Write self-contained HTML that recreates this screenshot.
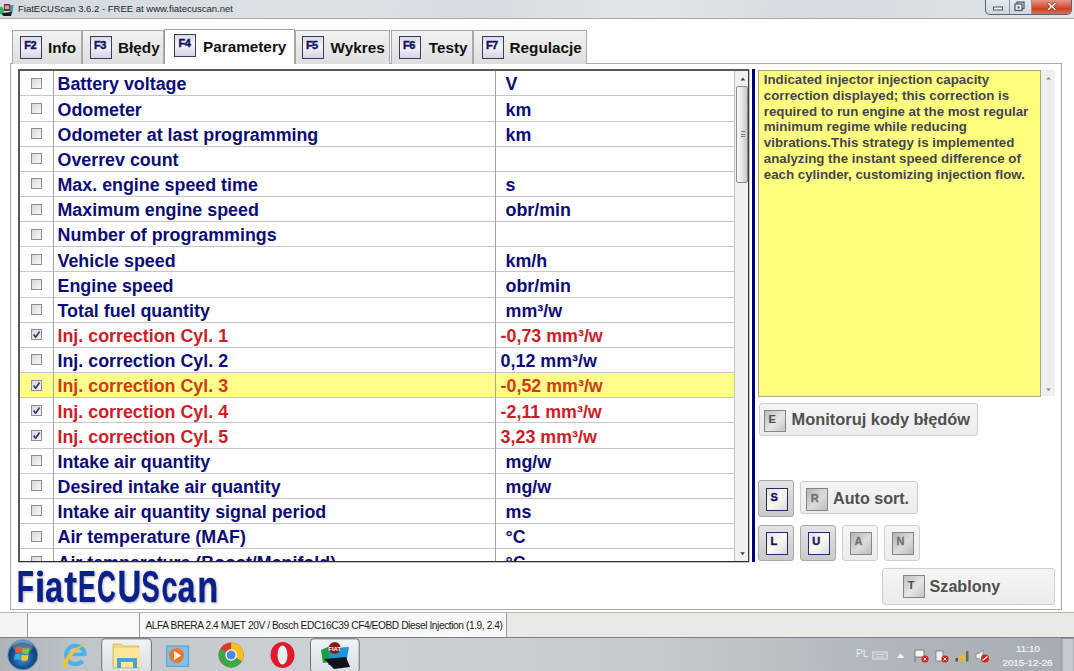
<!DOCTYPE html>
<html><head><meta charset="utf-8">
<style>
*{box-sizing:border-box}
html,body{margin:0;padding:0}
body{width:1074px;height:671px;overflow:hidden;position:relative;background:#fff;font-family:"Liberation Sans",sans-serif}
.abs{position:absolute}
#title{position:absolute;left:0;top:0;width:1074px;height:18.6px;background:linear-gradient(100deg,#d3d9df 0%,#dde2e7 30%,#d6dce1 45%,#e2e6ea 60%,#d5dbe0 75%,#dfe4e8 100%);border-bottom:1px solid #a9adb1}
#title .t{position:absolute;left:18px;top:3.2px;font-size:9.5px;color:#1e1e1e;white-space:nowrap}
#appico{position:absolute;left:2px;top:2px;width:13px;height:13px;border-radius:2px;background:linear-gradient(135deg,#2a7 0%,#153 60%,#a22 100%)}
#wbtn{position:absolute;left:985px;top:-1px;width:87px;height:16px;border:1px solid #5a6470;border-top:none;border-radius:0 0 5px 5px;overflow:hidden;background:linear-gradient(#e8ecf0,#cfd6dd)}
#wbtn .mx{position:absolute;left:23px;top:0;width:23px;height:16px;border-left:1px solid #8a949e;border-right:1px solid #8a949e}
#wbtn .cl{position:absolute;left:46px;top:0;width:41px;height:16px;background:linear-gradient(#e9a08f 0%,#d4533c 50%,#c7402a 60%,#db7a5f 100%)}
.tab{position:absolute;top:30px;height:33.5px;border:1px solid #a9a9a9;border-bottom:none;background:linear-gradient(#f2f2f2,#dedede)}
.tab.act{top:28.7px;height:35.5px;background:#fff;z-index:3;border-color:#a0a0a0}
.key{position:absolute;z-index:4;width:22px;height:22.8px;border:1.5px solid #3a3a5c;background:linear-gradient(#dcdce8 0%,#f4f4fa 45%,#e6e6f0 70%,#d4d4e4 100%);font-size:11px;font-weight:bold;color:#121266;padding:2.8px 0 0 3.2px;line-height:10px;letter-spacing:-0.5px;-webkit-text-stroke:0.45px #121266}
.tl{position:absolute;z-index:4;font-size:15.3px;font-weight:bold;color:#111;white-space:nowrap;line-height:18px}
#panel{position:absolute;left:10px;top:63px;width:1051.5px;height:546.5px;border:1px solid #aaaaaa;background:#fff}
#tbl{position:absolute;left:18px;top:69px;width:731px;height:493px;border-style:solid;border-color:#585858 #3a3a3a #2e2e2e #585858;border-width:2px 1px 1px 2px;overflow:hidden;background:#fff;box-shadow:0.5px 0.5px 0 #8a8a8a}
.row{position:absolute;left:0;width:713.5px;height:25.16px;border-bottom:1px solid #c6c6c6;font-size:17.85px;font-weight:bold;color:#0c0c78}
.row.red{color:#cf1c28}
.row.hl{background:#ffff8c}
.row.hl .nm, .row.hl .vl{color:#d23a14}
.nm{position:absolute;left:37.5px;top:3.3px;white-space:nowrap}
.vl{position:absolute;left:480.6px;top:3.3px;white-space:nowrap}
.cb{position:absolute;left:10.8px;top:6.5px;width:11px;height:11px;border:1px solid #8e8e8e;background:linear-gradient(135deg,#d8d8d8,#f8f8f8)}
.cb.on{background:linear-gradient(135deg,#d6d6e6,#f4f4fc)}
.cb svg{position:absolute;left:0;top:0}
.vline{position:absolute;top:0;width:1px;height:493px;background:#a4a4a4}
#sb1{position:absolute;left:713.5px;top:0;width:15px;height:491px;background:#f0f0f0;border-left:1px solid #c4c4c4}
.thumb{position:absolute;left:1px;top:15px;width:12.2px;height:96.5px;border:1px solid #8e8e8e;border-radius:2px;background:linear-gradient(90deg,#f6f6f6 0%,#e8e8e8 45%,#d4d4d4 80%,#c4c4c4 100%)}
.grip{position:absolute;left:4px;top:44px;width:4px;height:6px;border-top:1px solid #777;border-bottom:1px solid #777}
.grip::after{content:"";position:absolute;left:0;top:2px;width:4px;height:0;border-top:1px solid #777}
#bluebar{position:absolute;left:752px;top:69px;width:3px;height:492.5px;background:#000080}
#desc{position:absolute;left:757.8px;top:69.7px;width:283.5px;height:327.5px;border:1px solid #a8a880;background:#ffff80;font-size:13.3px;font-weight:bold;color:#45454f;line-height:15.77px;padding:1.5px 0 0 5px}
#sb2{position:absolute;left:1041px;top:70px;width:14.4px;height:326px;background:#efefef}
.btn{position:absolute;border:1px solid #cfcfcf;border-radius:3px;background:linear-gradient(#f5f5f5,#ececec)}
.btn .bk{position:absolute;width:22px;height:22.6px;border:1px solid #858585;background:linear-gradient(135deg,#bdbdbd 0%,#e6e6e6 55%,#c4c4c4 100%);color:#4e4e4e;font-size:11px;font-weight:bold;line-height:10px;padding:3.4px 0 0 3.4px;-webkit-text-stroke:0.15px #4e4e4e}
.btn .bk.dis{color:#727272;-webkit-text-stroke:0.3px #727272;background:linear-gradient(135deg,#b4b4b4 0%,#dcdcdc 55%,#bcbcbc 100%)}
.btn .bt{position:absolute;font-size:16.1px;font-weight:bold;color:#505050;white-space:nowrap}
.btn.dn{background:linear-gradient(#e4e4e4,#c9c9c9);border-color:#a8a8a8}
.btn.dn .bk{border:1.6px solid #2a2a66;background:linear-gradient(135deg,#e2e2ea 0%,#fbfbf0 50%,#d8d8e6 100%);color:#141466;padding:2.7px 0 0 3px;-webkit-text-stroke:0.4px #141466}
#logo{position:absolute;left:0;top:0;filter:drop-shadow(1.5px 1.5px 1.2px rgba(40,40,60,0.35))}
#status{position:absolute;left:0;top:612.3px;width:1074px;height:25px;background:#ebe8e6;border-top:1px solid #b8b8b8}
#status .p{position:absolute;top:0;height:24px;background:#f9f9f9;border-right:1px solid #9a9a9a}
#status .st{position:absolute;left:145.5px;top:7px;font-size:10.2px;letter-spacing:-0.42px;color:#1a1a1a;white-space:nowrap}
#task{position:absolute;left:0;top:637px;width:1074px;height:34px;background:linear-gradient(90deg,#aeb3b7 0%,#c0c5c9 8%,#cdd2d6 30%,#c6cbcf 60%,#b2b8bd 80%,#a6acb1 100%);border-top:1px solid #7a8086}
</style></head><body>
<div id="title"><svg class="abs" style="left:0;top:2px" width="16" height="15" viewBox="0 0 16 15"><path d="M0 5 C2 4 4 6 4 9 L3 13 L0 12 Z" fill="#2fb45a"/><path d="M4 2 L10 2 L10 9 L4 9 Z" fill="#7a2a35"/><path d="M5 3.5 L9 3.5 L9 7 L5 7 Z" fill="#d9a0a0"/><path d="M10 3 L13.5 3 L12.5 11 L9.5 11 Z" fill="#3a9aa0"/><path d="M2 11 L12 10 L11 14 L3 14 Z" fill="#151a2a"/></svg><div class="t">FiatECUScan 3.6.2 - FREE at www.fiatecuscan.net</div></div>
<div id="wbtn"><div class="mx"></div><div class="cl"></div>
<svg class="abs" style="left:0;top:0" width="87" height="16"><rect x="7.5" y="8" width="9" height="3" fill="#fff" stroke="#4a5560" stroke-width="1"/>
<rect x="31" y="3" width="7" height="6.5" fill="none" stroke="#4a5560" stroke-width="1.2"/><rect x="29" y="5" width="7" height="6.5" fill="#e6eaee" stroke="#4a5560" stroke-width="1.2"/><rect x="31.5" y="7.5" width="2" height="2" fill="#4a5560"/>
<path d="M63 3.2 L65.8 6.2 L68.6 3.2 L70.4 4.6 L67.4 7.4 L70.4 10.2 L68.6 11.6 L65.8 8.6 L63 11.6 L61.2 10.2 L64.2 7.4 L61.2 4.6 Z" fill="#fff" stroke="#6a3a30" stroke-width="0.7"/></svg></div>

<div id="panel"></div>
<div class="tab" style="left:12.3px;width:69.3px"></div><span class="key" style="left:20px;top:36.0px">F2</span><span class="tl" style="left:48px;top:38.8px">Info</span>
<div class="tab" style="left:81.6px;width:82.80000000000001px"></div><span class="key" style="left:89.8px;top:36.0px">F3</span><span class="tl" style="left:118px;top:38.8px">Błędy</span>
<div class="tab act" style="left:164.4px;width:130.4px"></div><span class="key" style="left:174.3px;top:34.0px">F4</span><span class="tl" style="left:203px;top:37.6px">Parametery</span>
<div class="tab" style="left:294.8px;width:95.69999999999999px"></div><span class="key" style="left:301.7px;top:36.0px">F5</span><span class="tl" style="left:330.6px;top:38.8px">Wykres</span>
<div class="tab" style="left:390.5px;width:82.80000000000001px"></div><span class="key" style="left:398.9px;top:36.0px">F6</span><span class="tl" style="left:428.7px;top:38.8px">Testy</span>
<div class="tab" style="left:473.3px;width:113.30000000000001px"></div><span class="key" style="left:481.7px;top:36.0px">F7</span><span class="tl" style="left:509.5px;top:38.8px">Regulacje</span>

<div id="tbl">
<div class="row" style="top:0.20px"><span class="cb"></span><span class="nm">Battery voltage</span><span class="vl">&nbsp;V</span></div>
<div class="row" style="top:25.36px"><span class="cb"></span><span class="nm">Odometer</span><span class="vl">&nbsp;km</span></div>
<div class="row" style="top:50.52px"><span class="cb"></span><span class="nm">Odometer at last programming</span><span class="vl">&nbsp;km</span></div>
<div class="row" style="top:75.68px"><span class="cb"></span><span class="nm">Overrev count</span><span class="vl"></span></div>
<div class="row" style="top:100.84px"><span class="cb"></span><span class="nm">Max. engine speed time</span><span class="vl">&nbsp;s</span></div>
<div class="row" style="top:126.00px"><span class="cb"></span><span class="nm">Maximum engine speed</span><span class="vl">&nbsp;obr/min</span></div>
<div class="row" style="top:151.16px"><span class="cb"></span><span class="nm">Number of programmings</span><span class="vl"></span></div>
<div class="row" style="top:176.32px"><span class="cb"></span><span class="nm">Vehicle speed</span><span class="vl">&nbsp;km/h</span></div>
<div class="row" style="top:201.48px"><span class="cb"></span><span class="nm">Engine speed</span><span class="vl">&nbsp;obr/min</span></div>
<div class="row" style="top:226.64px"><span class="cb"></span><span class="nm">Total fuel quantity</span><span class="vl">&nbsp;mm&sup3;/w</span></div>
<div class="row red" style="top:251.80px"><span class="cb on"><svg width="9" height="9"><path d="M1.6 4.6 L3.6 7.2 L7.6 1.6" fill="none" stroke="#3a3a5e" stroke-width="1.7" stroke-linejoin="round"/></svg></span><span class="nm">Inj. correction Cyl. 1</span><span class="vl">-0,73 mm&sup3;/w</span></div>
<div class="row" style="top:276.96px"><span class="cb"></span><span class="nm">Inj. correction Cyl. 2</span><span class="vl">0,12 mm&sup3;/w</span></div>
<div class="row red hl" style="top:302.12px"><span class="cb on"><svg width="9" height="9"><path d="M1.6 4.6 L3.6 7.2 L7.6 1.6" fill="none" stroke="#3a3a5e" stroke-width="1.7" stroke-linejoin="round"/></svg></span><span class="nm">Inj. correction Cyl. 3</span><span class="vl">-0,52 mm&sup3;/w</span></div>
<div class="row red" style="top:327.28px"><span class="cb on"><svg width="9" height="9"><path d="M1.6 4.6 L3.6 7.2 L7.6 1.6" fill="none" stroke="#3a3a5e" stroke-width="1.7" stroke-linejoin="round"/></svg></span><span class="nm">Inj. correction Cyl. 4</span><span class="vl">-2,11 mm&sup3;/w</span></div>
<div class="row red" style="top:352.44px"><span class="cb on"><svg width="9" height="9"><path d="M1.6 4.6 L3.6 7.2 L7.6 1.6" fill="none" stroke="#3a3a5e" stroke-width="1.7" stroke-linejoin="round"/></svg></span><span class="nm">Inj. correction Cyl. 5</span><span class="vl">3,23 mm&sup3;/w</span></div>
<div class="row" style="top:377.60px"><span class="cb"></span><span class="nm">Intake air quantity</span><span class="vl">&nbsp;mg/w</span></div>
<div class="row" style="top:402.76px"><span class="cb"></span><span class="nm">Desired intake air quantity</span><span class="vl">&nbsp;mg/w</span></div>
<div class="row" style="top:427.92px"><span class="cb"></span><span class="nm">Intake air quantity signal period</span><span class="vl">&nbsp;ms</span></div>
<div class="row" style="top:453.08px"><span class="cb"></span><span class="nm">Air temperature (MAF)</span><span class="vl">&nbsp;&deg;C</span></div>
<div class="row" style="top:478.24px"><span class="cb"></span><span class="nm">Air temperature (Boost/Manifold)</span><span class="vl">&nbsp;&deg;C</span></div>
<div class="vline" style="left:33.2px"></div>
<div class="vline" style="left:475.2px"></div>
<div id="sb1"><svg class="abs" style="left:3px;top:5px" width="9" height="6"><path d="M2.5 4.4 L4.9 1.4 L7.3 4.4 Z" fill="#404040"/></svg><div class="thumb"><div class="grip"></div></div><svg class="abs" style="left:3px;top:480px" width="9" height="6"><path d="M2.3 1.2 L4.6 4.2 L6.9 1.2 Z" fill="#404040"/></svg></div>
</div>
<div id="bluebar"></div>
<div id="desc">Indicated injector injection capacity correction displayed; this correction is required to run engine at the most regular minimum regime while reducing vibrations.This strategy is implemented analyzing the instant speed difference of each cylinder, customizing injection flow.</div>
<div id="sb2"><svg class="abs" style="left:3px;top:4.5px" width="9" height="6"><path d="M2 4.6 L4.5 2 L7 4.6 Z" fill="#8a8a8a"/></svg><svg class="abs" style="left:3px;top:317px" width="9" height="6"><path d="M2 1.4 L4.5 4 L7 1.4 Z" fill="#8a8a8a"/></svg></div>

<div class="btn" style="left:759px;top:403px;width:219px;height:32.5px"><span class="bk" style="left:4px;top:5.5px">E</span><span class="bt" style="left:31.6px;top:6.3px;font-size:16.4px">Monitoruj kody błędów</span></div>
<div class="btn dn" style="left:758.4px;top:480.4px;width:35.5px;height:37px"><span class="bk" style="left:7px;top:7px">S</span></div>
<div class="btn" style="left:800.3px;top:481.4px;width:117.3px;height:33px"><span class="bk dis" style="left:5px;top:6px">R</span><span class="bt" style="left:31.8px;top:6.8px">Auto sort.</span></div>
<div class="btn dn" style="left:758.4px;top:524.5px;width:35.5px;height:36px"><span class="bk" style="left:7px;top:6.5px">L</span></div>
<div class="btn dn" style="left:800.3px;top:524.5px;width:35.5px;height:36px"><span class="bk" style="left:7px;top:6.5px">U</span></div>
<div class="btn" style="left:842.2px;top:524.5px;width:35.5px;height:36px"><span class="bk dis" style="left:7px;top:6.5px">A</span></div>
<div class="btn" style="left:884px;top:524.5px;width:35.5px;height:36px"><span class="bk dis" style="left:7px;top:6.5px">N</span></div>
<div class="btn" style="left:882.3px;top:568.3px;width:172.3px;height:36.5px"><span class="bk" style="left:20px;top:6px">T</span><span class="bt" style="left:46.3px;top:8px">Szablony</span></div>

<svg id="logo" width="1074" height="671" viewBox="0 0 1074 671"><g font-family="Liberation Sans" font-weight="bold" font-size="45" fill="#0b2088" stroke="#0b2088" stroke-width="0.25">
<text transform="translate(16.81 601.8) scale(0.626 1)">F</text>
<rect x="37.3" y="578.6" width="5.5" height="23.2" stroke="none"/><circle cx="40.05" cy="573.4" r="2.9" stroke="none"/>
<text transform="translate(44.94 601.8) scale(0.725 1)">a</text>
<text transform="translate(64.33 601.8) scale(0.850 1)">t</text>
<text transform="translate(78.01 601.8) scale(0.594 1)">E</text>
<text transform="translate(96.93 601.8) scale(0.578 1)">C</text>
<text transform="translate(117.52 601.8) scale(0.732 1)">U</text>
<text transform="translate(141.30 601.8) scale(0.616 1)">S</text>
<text transform="translate(161.39 601.8) scale(0.633 1)">c</text>
<text transform="translate(177.55 601.8) scale(0.717 1)">a</text>
<text transform="translate(197.13 601.8) scale(0.764 1)">n</text>
</g></svg>

<div id="status">
<div class="p" style="left:0;width:28.3px;background:#f3f3f3"></div>
<div class="p" style="left:28.3px;width:111.7px"></div>
<div class="p" style="left:140px;width:366.7px"></div>
<div class="st">ALFA BRERA 2.4 MJET 20V / Bosch EDC16C39 CF4/EOBD Diesel Injection (1.9, 2.4)</div>
</div>
<div id="task"><svg class="abs" style="left:0;top:0" width="1074" height="34" viewBox="0 637 1074 34">
<defs>
<radialGradient id="orb" cx="50%" cy="60%" r="55%"><stop offset="0" stop-color="#3a9ad8"/><stop offset="0.55" stop-color="#1a5a9a"/><stop offset="0.85" stop-color="#0e3e74"/><stop offset="1" stop-color="#4a90c0"/></radialGradient>
<linearGradient id="btnsel" x1="0" y1="0" x2="0" y2="1"><stop offset="0" stop-color="#f2f4f6"/><stop offset="1" stop-color="#d8dde2"/></linearGradient>
</defs>
<circle cx="22.8" cy="653.7" r="15.2" fill="url(#orb)" stroke="#8aa4b8" stroke-width="0.8"/>
<ellipse cx="22.8" cy="646" rx="10" ry="6" fill="#ffffff" opacity="0.25"/>
<path d="M16 646.5 Q19 645 22 646.8 L21.2 652.3 Q18.5 650.8 15.2 652.2 Z" fill="#f05a28"/>
<path d="M22.8 646.8 Q25.8 648.6 29.5 646.5 L28.8 652.2 Q25.5 654 22 652.3 Z" fill="#80c242"/>
<path d="M15 653.3 Q18.3 651.8 21 653.4 L20.2 659 Q17.5 657.5 14.2 659 Z" fill="#35aaf0"/>
<path d="M21.8 653.4 Q25 655 28.6 653.3 L27.8 659 Q24.6 660.8 21 659 Z" fill="#fcc420"/>
<path d="M84.6 654.5 A9.2 9.2 0 1 0 82.5 659.8" fill="none" stroke="#4ab2ea" stroke-width="4.2"/>
<rect x="67.5" y="651.6" width="17" height="3.6" fill="#4ab2ea"/>
<path d="M63 666 Q64 650 87 642 Q70 652 66 666 Z" fill="#f2c232"/>
<rect x="101.7" y="637.8" width="49.7" height="33.5" rx="3" fill="url(#btnsel)" stroke="#6a7075" stroke-width="1"/>
<path d="M113 643 L121 643 L123 645 L139 645 L139 667 L113 667 Z" fill="#f0d878" stroke="#c8a850" stroke-width="0.6"/>
<path d="M114 647 L140 647 L140 666 L114 666 Z" fill="#fbe89a"/>
<path d="M117 657 L137 657 L137 667 L133 667 L133 661 L121 661 L121 667 L117 667 Z" fill="#4aa0e0"/>
<rect x="166.7" y="645" width="22" height="20.3" fill="#7ec0ec" stroke="#4a90c8" stroke-width="0.8"/>
<circle cx="176.5" cy="654.5" r="7.5" fill="#f07828"/>
<path d="M174 650 L181 654.5 L174 659 Z" fill="#fff"/>
<circle cx="231.1" cy="654" r="12.5" fill="#d93a30"/>
<path d="M231.1 654 L231.1 641.5 A12.5 12.5 0 0 1 241.9 660.2 Z" fill="#f4c21a"/>
<path d="M231.1 654 L241.9 660.2 A12.5 12.5 0 0 1 220.3 660.2 L220.3 660.2 Z" fill="#3da84a"/>
<path d="M231.1 654 L220.3 660.2 A12.5 12.5 0 0 1 220.3 647.8 Z" fill="#3da84a"/>
<circle cx="231.1" cy="654" r="5.8" fill="#fff"/>
<circle cx="231.1" cy="654" r="4.5" fill="#4a88e8"/>
<ellipse cx="282.5" cy="654" rx="12" ry="13" fill="#e01a2a"/>
<ellipse cx="282.5" cy="654" rx="5" ry="9.5" fill="#eceff2"/>
<rect x="310.5" y="637.8" width="48.7" height="33.5" rx="3" fill="url(#btnsel)" stroke="#6a7075" stroke-width="1"/>
<path d="M321 649 L330 645 L331 661 L323 662 Z" fill="#1aa040"/>
<path d="M330 647 L349 646 L346 663 L328 664 Z" fill="#1898d8"/>
<path d="M324 658 L346 656 L350 666 L334 668 Z" fill="#101418"/>
<circle cx="334.7" cy="647" r="6" fill="#8a1a1a"/>
<text x="334.7" y="649.5" font-family="Liberation Sans" font-size="6" font-weight="bold" fill="#fff" text-anchor="middle">FIAT</text>
<text x="856" y="655.6" font-family="Liberation Sans" font-size="10" fill="#eef0f2">PL</text>
<rect x="873" y="651" width="14" height="7" fill="none" stroke="#e8eaec" stroke-width="1"/>
<path d="M875 653.5 H885 M876 656 H884" stroke="#e8eaec" stroke-width="0.8"/>
<path d="M897 657 L900.6 652.5 L904.4 657 Z" fill="#f2f4f6"/>
<path d="M915 649 L915 661 M915 649 L924 649 L924 656 L915 656" fill="#f4f4f4" stroke="#666" stroke-width="0.8"/>
<circle cx="925" cy="658" r="3.6" fill="#d82020"/>
<path d="M923.5 656.5 L926.5 659.5 M926.5 656.5 L923.5 659.5" stroke="#fff" stroke-width="1"/>
<rect x="936" y="650" width="7" height="10" fill="#f0f0f0" stroke="#777" stroke-width="0.8"/>
<circle cx="945" cy="658" r="3.6" fill="#d82020"/>
<path d="M943.5 656.5 L946.5 659.5 M946.5 656.5 L943.5 659.5" stroke="#fff" stroke-width="1"/>
<rect x="955.5" y="657" width="2.5" height="3.5" fill="#555"/><rect x="959" y="655" width="2.5" height="5.5" fill="#e8c020"/><rect x="962.5" y="652.5" width="2.5" height="8" fill="#e8c020"/><rect x="966" y="650" width="2.5" height="10.5" fill="#666"/>
<path d="M976 652.5 L979 652.5 L983 649 L983 661 L979 657.5 L976 657.5 Z" fill="#f4f4f4" stroke="#777" stroke-width="0.7"/>
<circle cx="985" cy="657.5" r="4" fill="#d82020"/>
<path d="M982.5 659.5 L987.5 655.5" stroke="#fff" stroke-width="1.2"/>
<text x="1028" y="651" font-family="Liberation Sans" font-size="9.8" fill="#f4f6f8" stroke="#f4f6f8" stroke-width="0.2" text-anchor="middle">11:10</text>
<text x="1027.5" y="664.6" font-family="Liberation Sans" font-size="9.8" fill="#f4f6f8" stroke="#f4f6f8" stroke-width="0.2" text-anchor="middle">2015-12-26</text>
<rect x="1062" y="637.5" width="12" height="34" fill="#c4cacf" stroke="#8a9096" stroke-width="0.8"/>
</svg></div>
</body></html>
